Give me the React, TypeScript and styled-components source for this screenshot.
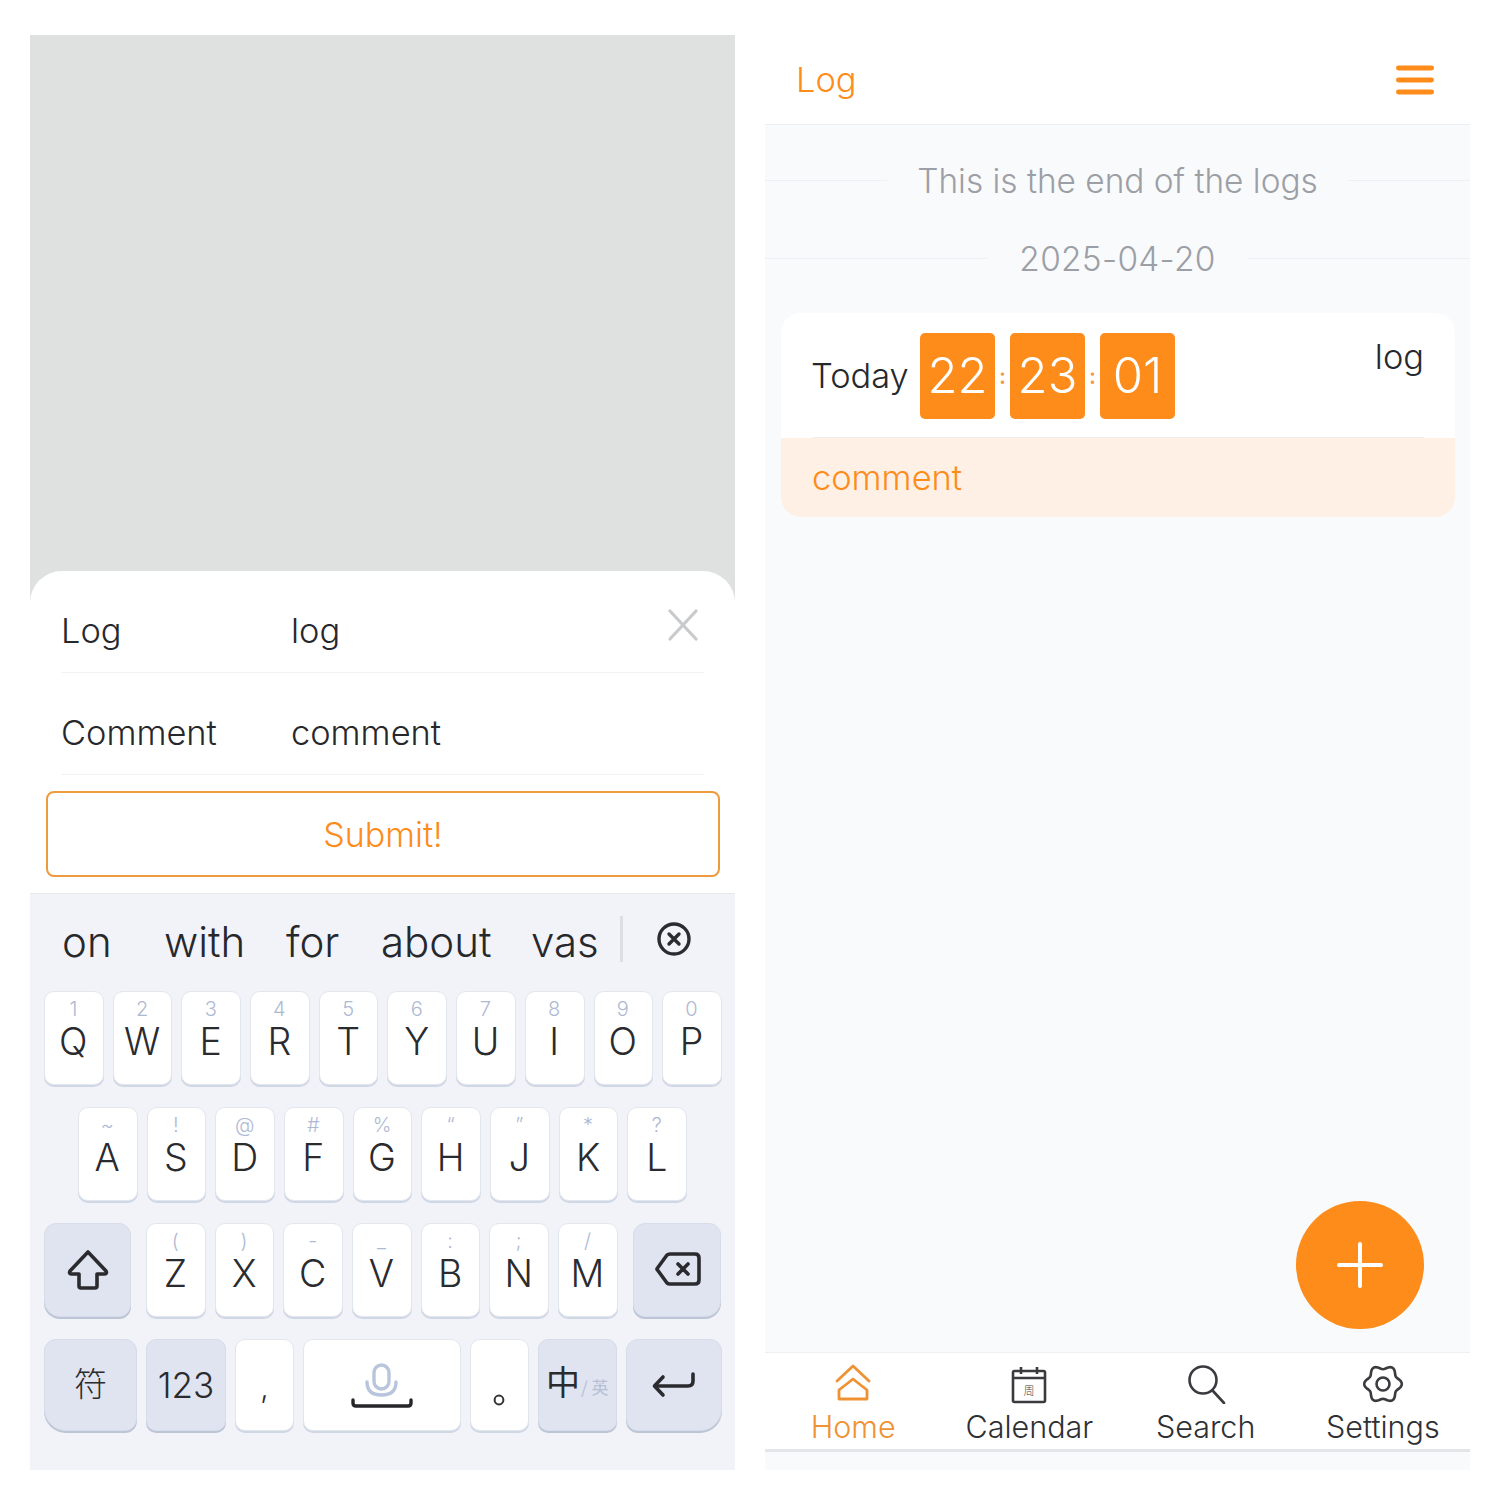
import React from "react";
import styled, { createGlobalStyle } from "styled-components";

const ORANGE = "#fd8c1b";
const SANS = `Inter, "Noto Sans CJK SC", sans-serif`;

const Global = createGlobalStyle`
  html, body { margin: 0; padding: 0; background: #fff; }
  body { font-family: ${SANS}; font-weight: 300; color: #27282c; }
`;

const Page = styled.div`
  display: flex;
  gap: 30px;
  width: 1500px;
  height: 1500px;
  box-sizing: border-box;
  padding: 35px 30px 30px;
  background: #fff;
`;

const Phone = styled.div<{ $bg: string }>`
  position: relative;
  display: flex;
  flex-direction: column;
  justify-content: space-between;
  width: 705px;
  height: 1435px;
  background: ${(p) => p.$bg};
`;

const Sheet = styled.div`
  margin-top: auto;
  height: 322px;
  box-sizing: border-box;
  background: #fff;
  border-radius: 32px 32px 0 0;
  padding: 0 31px 0 31px;
  display: flex;
  flex-direction: column;
`;

const FormRow = styled.div`
  height: 102px;
  box-sizing: border-box;
  display: flex;
  align-items: center;
  padding-top: 17px;
  border-bottom: 1px solid #f1f2f3;
  font-size: 34.4px;
  flex: none;
`;

const FormLabel = styled.span`
  width: 230px;
`;

const FormValue = styled.span`
  flex: 1;
`;

const Close = styled.svg`
  width: 30px;
  height: 32px;
  margin: 0 6px 11px 0;
`;

const Submit = styled.button`
  margin: 16px -16px 0 -15px;
  height: 86px;
  flex: none;
  box-sizing: border-box;
  background: #fff;
  border: 2px solid #ee9a3f;
  border-radius: 8px;
  color: ${ORANGE};
  font: 300 34px ${SANS};
`;

const Keyboard = styled.div`
  height: 577px;
  box-sizing: border-box;
  background: #f1f3f8;
  border-top: 1px solid #e7e8eb;
  padding: 0 14px;
  display: flex;
  flex-direction: column;
`;

const Suggestions = styled.div`
  height: 97px;
  flex: none;
  display: flex;
  align-items: center;
  font-size: 42px;
  padding-bottom: 3px;
  box-sizing: border-box;
`;

const Word = styled.span<{ $w: number; $pad?: number }>`
  width: ${(p) => p.$w}px;
  box-sizing: border-box;
  padding-left: ${(p) => p.$pad ?? 0}px;
  flex: none;
`;

const SuggestSep = styled.span`
  width: 3px;
  height: 46px;
  margin-top: -4px;
  background: #dcdee2;
  flex: none;
`;

const Dismiss = styled.svg`
  width: 36px;
  height: 36px;
  margin: -4px 0 0 33px;
`;

const KeyRow = styled.div<{ $center?: boolean; $h?: number }>`
  display: flex;
  justify-content: ${(p) => (p.$center ? "center" : "flex-start")};
  gap: 9px;
  height: ${(p) => p.$h ?? 94}px;
  margin-bottom: 22px;
  flex: none;
`;

const Key = styled.div<{ $w?: number; $dark?: boolean; $corner?: string; $ml?: number }>`
  width: ${(p) => p.$w ?? 59.7}px;
  margin-left: ${(p) => p.$ml ?? 0}px;
  flex: none;
  box-sizing: border-box;
  display: flex;
  flex-direction: column;
  align-items: center;
  justify-content: center;
  background: ${(p) => (p.$dark ? "#dfe4f0" : "#fff")};
  border: 1px solid ${(p) => (p.$dark ? "#d6dce8" : "#e2e6ee")};
  border-radius: ${(p) => p.$corner ?? "10px"};
  box-shadow: 0 2px 0 ${(p) => (p.$dark ? "#bcc5d6" : "#cfd7e5")};
  color: #2a2b2f;
`;

const KeyInner = styled.div`
  width: 100%;
  height: 100%;
  display: flex;
  flex-direction: column;
  align-items: center;
  padding-top: 4px;
  padding-right: 1px;
  box-sizing: border-box;
`;

const Sub = styled.span`
  font: 300 20px/26px Inter, sans-serif;
  height: 26px;
  color: #aeb9d2;
`;

const Main = styled.span`
  font: 300 37.5px/38px Inter, sans-serif;
  margin-top: 1px;
`;

const Wide = styled.span<{ $size?: number; $shift?: number }>`
  font-size: ${(p) => p.$size ?? 35}px;
  line-height: 1;
  margin-top: ${(p) => p.$shift ?? 0}px;
  font-family: Inter, "Noto Sans CJK SC", sans-serif;
`;

const ZhWrap = styled.span`
  display: flex;
  align-items: baseline;
  font-family: "Noto Sans CJK SC", sans-serif;
  font-weight: 400;
  font-size: 34px;
  line-height: 1;
  margin: -8px 0 0 0;
`;

const ZhSub = styled.span`
  font-size: 17px;
  color: #b6c0d6;
  margin-left: 1px;
  position: relative;
  top: -1px;
`;

const Header = styled.div`
  height: 90px;
  flex: none;
  box-sizing: border-box;
  background: #fff;
  border-bottom: 1px solid #eceef0;
  display: flex;
  align-items: center;
  justify-content: space-between;
  padding: 0 36px 0 31px;
  color: ${ORANGE};
  font-size: 34.4px;
`;

const Menu = styled.svg`
  width: 38px;
  height: 30px;
  margin-top: 1px;
`;

const Feed = styled.div`
  flex: 1;
  display: flex;
  flex-direction: column;
  padding-top: 16px;
`;

const Rule = styled.div<{ $gap: number; $track?: number }>`
  height: 78px;
  flex: none;
  display: flex;
  align-items: center;
  gap: ${(p) => p.$gap}px;
  color: #9c9fa5;
  font-size: 33.4px;
  padding-top: 1px;
  box-sizing: border-box;
  letter-spacing: ${(p) => p.$track ?? 0}px;
  &::before, &::after {
    content: "";
    flex: 1;
    height: 1px;
    background: #eff0f3;
  }
`;

const Card = styled.div`
  width: 674px;
  margin: 16px 0 0 16px;
  background: #fff;
  border-radius: 20px;
  overflow: hidden;
`;

const CardTop = styled.div`
  height: 125px;
  margin: 0 31px;
  padding-top: 1px;
  box-sizing: border-box;
  border-bottom: 1px solid #eeeef0;
  display: flex;
  align-items: center;
  font-size: 34.4px;
`;

const Today = styled.span`
  width: 108px;
  flex: none;
  margin-left: -1px;
  padding-right: 1px;
`;

const TimeBox = styled.span`
  width: 75px;
  height: 86px;
  border-radius: 5px;
  background: ${ORANGE};
  color: #fff;
  font-size: 49px;
  display: flex;
  align-items: center;
  justify-content: center;
`;

const Colon = styled.span`
  width: 15px;
  text-align: center;
  color: #f39a45;
  font-size: 22px;
  font-weight: 600;
`;

const CardLog = styled.span`
  margin-left: auto;
  align-self: flex-start;
  margin-top: 22px;
`;

const CardComment = styled.div`
  height: 79px;
  background: #fef0e4;
  color: ${ORANGE};
  font-size: 34.4px;
  display: flex;
  align-items: center;
  padding-left: 31px;
`;

const Fab = styled.button`
  position: absolute;
  right: 46px;
  bottom: 141px;
  width: 128px;
  height: 128px;
  border: none;
  border-radius: 50%;
  background: ${ORANGE};
  display: flex;
  align-items: center;
  justify-content: center;
  padding: 0;
`;

const TabBar = styled.div`
  flex: none;
  height: 100px;
  margin-bottom: 18px;
  box-sizing: border-box;
  background: #fff;
  border-top: 1px solid #eeeff2;
  border-bottom: 3px solid #e4e5e9;
  display: grid;
  grid-template-columns: repeat(4, 1fr);
`;

const Tab = styled.div<{ $active?: boolean; $nudge?: number }>`
  display: flex;
  flex-direction: column;
  align-items: center;
  padding-top: 11px;
  padding-left: ${(p) => p.$nudge ?? 0}px;
  color: ${(p) => (p.$active ? "#ef9233" : "#2f3034")};
  font-size: 30.5px;
  line-height: 40px;
`;

const TabIcon = styled.svg`
  width: 40px;
  height: 40px;
  margin-bottom: 3px;
  flex: none;
`;

const row1: [string, string][] = [
  ["1", "Q"], ["2", "W"], ["3", "E"], ["4", "R"], ["5", "T"],
  ["6", "Y"], ["7", "U"], ["8", "I"], ["9", "O"], ["0", "P"],
];
const row2: [string, string][] = [
  ["~", "A"], ["!", "S"], ["@", "D"], ["#", "F"], ["%", "G"],
  ["“", "H"], ["”", "J"], ["*", "K"], ["?", "L"],
];
const row3: [string, string][] = [
  ["(", "Z"], [")", "X"], ["-", "C"], ["_", "V"], [":", "B"], [";", "N"], ["/", "M"],
];

const gearPath = (() => {
  const pts: string[] = [];
  for (let i = 0; i < 96; i++) {
    const t = (i / 96) * Math.PI * 2;
    const r = 16.8 + 2 * Math.cos(6 * t);
    pts.push(`${(20 + r * Math.cos(t)).toFixed(2)} ${(20 + r * Math.sin(t)).toFixed(2)}`);
  }
  return `M${pts.join("L")}Z`;
})();

const LetterKey = ({ sub, main, ml }: { sub: string; main: string; ml?: number }) => (
  <Key $ml={ml}>
    <KeyInner>
      <Sub>{sub}</Sub>
      <Main>{main}</Main>
    </KeyInner>
  </Key>
);

export default function App() {
  return (
    <Page>
      <Global />
      <Phone $bg="#dfe1e0">
        <Sheet>
          <FormRow>
            <FormLabel>Log</FormLabel>
            <FormValue>log</FormValue>
            <Close viewBox="0 0 30 32" fill="none" stroke="#c9cacc" strokeWidth="3.2" strokeLinecap="round">
              <path d="M2 2L28 30M28 2L2 30" />
            </Close>
          </FormRow>
          <FormRow>
            <FormLabel>Comment</FormLabel>
            <FormValue>comment</FormValue>
          </FormRow>
          <Submit>Submit!</Submit>
        </Sheet>
        <Keyboard>
          <Suggestions>
            <Word $w={120} $pad={18}>on</Word>
            <Word $w={122}>with</Word>
            <Word $w={95}>for</Word>
            <Word $w={150}>about</Word>
            <Word $w={89}>vas</Word>
            <SuggestSep />
            <Dismiss viewBox="0 0 36 36" fill="none" stroke="#2c2c30" strokeWidth="3.4" strokeLinecap="round">
              <circle cx="18" cy="18" r="15" />
              <path d="M13 13L23 23M23 13L13 23" />
            </Dismiss>
          </Suggestions>
          <KeyRow>
            {row1.map(([s, m]) => <LetterKey key={m} sub={s} main={m} />)}
          </KeyRow>
          <KeyRow $center>
            {row2.map(([s, m]) => <LetterKey key={m} sub={s} main={m} />)}
          </KeyRow>
          <KeyRow>
            <Key $w={87} $dark $corner="12px 12px 12px 16px">
              <svg width="42" height="40" viewBox="0 0 42 40" fill="none" stroke="#2b2b2f" strokeWidth="3.6" strokeLinejoin="round">
                <path d="M21 2L39 21Q40.5 24 37 24H30V36Q30 38 28 38H14Q12 38 12 36V24H5Q1.5 24 3 21Z" />
              </svg>
            </Key>
            {row3.map(([s, m], i) => <LetterKey key={m} sub={s} main={m} ml={i === 0 ? 6 : 0} />)}
            <Key $w={88.6} $dark $ml={6} $corner="12px 12px 16px 12px">
              <svg width="46" height="34" viewBox="0 0 46 34" fill="none" stroke="#2b2b2f" strokeWidth="3.6" strokeLinecap="round" strokeLinejoin="round" style={{ marginLeft: 1, marginTop: -2 }}>
                <path d="M15 2H40Q44 2 44 6V28Q44 32 40 32H15Q13 32 12 31L2.5 18Q1.5 17 2.5 16L12 3Q13 2 15 2Z" />
                <path d="M23 12L33 22M33 12L23 22" />
              </svg>
            </Key>
          </KeyRow>
          <KeyRow $h={92}>
            <Key $w={93} $dark $corner="12px 12px 12px 22px">
              <Wide $size={33} $shift={-2}>符</Wide>
            </Key>
            <Key $w={80} $dark><Wide>123</Wide></Key>
            <Key $w={59}><Wide $size={30} $shift={4}>,</Wide></Key>
            <Key $w={157.5}>
              <svg width="62" height="46" viewBox="0 0 62 46" fill="none" strokeLinecap="round" style={{ marginTop: 2 }}>
                <rect x="23" y="2" width="15" height="24" rx="7.5" stroke="#b9c5dd" strokeWidth="3.4" />
                <path d="M16 19C16 29 23 32 30.5 32C38 32 45 29 45 19" stroke="#b9c5dd" strokeWidth="3.4" />
                <path d="M2 37V40Q2 43 5 43H57Q60 43 60 40V37" stroke="#26262a" strokeWidth="3.4" />
              </svg>
            </Key>
            <Key $w={59}>
              <svg width="12" height="12" viewBox="0 0 12 12" fill="none" stroke="#333" strokeWidth="2" style={{ marginTop: 29 }}>
                <circle cx="6" cy="6" r="4.4" />
              </svg>
            </Key>
            <Key $w={79.5} $dark>
              <ZhWrap>中<ZhSub>/ 英</ZhSub></ZhWrap>
            </Key>
            <Key $w={95.5} $dark $corner="12px 12px 22px 12px">
              <svg width="44" height="28" viewBox="0 0 44 28" fill="none" stroke="#2b2b2f" strokeWidth="3.6" strokeLinecap="round" strokeLinejoin="round">
                <path d="M41 3V10Q41 15 36 15H3" />
                <path d="M11 6L2.5 15L11 24" />
              </svg>
            </Key>
          </KeyRow>
        </Keyboard>
      </Phone>

      <Phone $bg="#f9fafc">
        <Header>
          <span>Log</span>
          <Menu viewBox="0 0 38 30" fill="none" stroke={ORANGE} strokeWidth="4.8" strokeLinecap="round">
            <path d="M2.4 3H35.6M2.4 15H35.6M2.4 27H35.6" />
          </Menu>
        </Header>
        <Feed>
          <Rule $gap={30}>This is the end of the logs</Rule>
          <Rule $gap={32} $track={0.3}>2025-04-20</Rule>
          <Card>
            <CardTop>
              <Today>Today</Today>
              <TimeBox>22</TimeBox>
              <Colon>:</Colon>
              <TimeBox>23</TimeBox>
              <Colon>:</Colon>
              <TimeBox>01</TimeBox>
              <CardLog>log</CardLog>
            </CardTop>
            <CardComment>comment</CardComment>
          </Card>
        </Feed>
        <TabBar>
          <Tab $active>
            <TabIcon viewBox="0 0 40 40" fill="none" stroke="#ef9233" strokeWidth="2.8" strokeLinecap="round" strokeLinejoin="round">
              <path d="M4 17L20 2L36 17" />
              <path d="M20 15L34 26V35H6V26Z" />
            </TabIcon>
            Home
          </Tab>
          <Tab>
            <TabIcon viewBox="0 0 40 40" fill="none" stroke="#3a3b3f" strokeWidth="2.6">
              <rect x="4" y="7" width="32" height="31" rx="1.5" />
              <path d="M4 14H36M12 3V10M28 3V10" />
              <text x="20" y="31" fontSize="11" textAnchor="middle" fill="#3a3b3f" stroke="none" fontFamily="'Noto Sans CJK SC', sans-serif">周</text>
            </TabIcon>
            Calendar
          </Tab>
          <Tab>
            <TabIcon viewBox="0 0 40 40" fill="none" stroke="#3a3b3f" strokeWidth="2.6" strokeLinecap="round">
              <circle cx="17" cy="16" r="13.5" />
              <path d="M27 27L38 39" />
            </TabIcon>
            Search
          </Tab>
          <Tab $nudge={2}>
            <TabIcon viewBox="0 0 40 40" fill="none" stroke="#3a3b3f" strokeWidth="2.6" strokeLinejoin="round">
              <path d={gearPath} />
              <circle cx="20" cy="20" r="6.5" />
            </TabIcon>
            Settings
          </Tab>
        </TabBar>
        <Fab aria-label="add">
          <svg width="46" height="46" viewBox="0 0 46 46" fill="none" stroke="#fff" strokeWidth="4" strokeLinecap="round">
            <path d="M23 2V44M2 23H44" />
          </svg>
        </Fab>
      </Phone>
    </Page>
  );
}
